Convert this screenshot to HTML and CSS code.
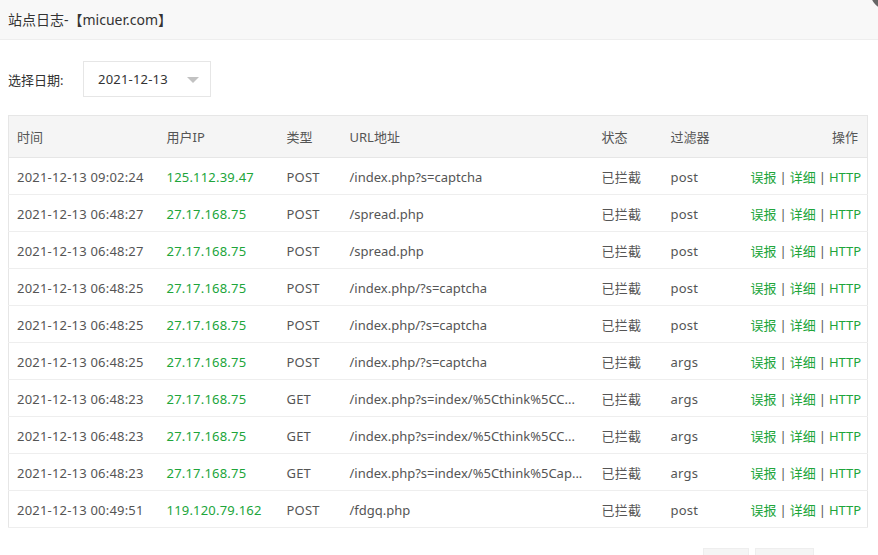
FILE: index.html
```html
<!DOCTYPE html>
<html lang="zh-CN">
<head>
<meta charset="utf-8">
<title>站点日志</title>
<link rel="stylesheet" href="styles.css">
</head>
<body>
<div class="layer">
  <div class="layer-title">站点日志-【micuer.com】</div>
  <span class="layer-close"></span>
  <div class="layer-content">
    <div class="filter">
      <span class="filter-label">选择日期:</span>
      <div class="select">
        <span class="select-value">2021-12-13</span>
        <span class="select-arrow"></span>
      </div>
    </div>
    <table class="log-table">
      <colgroup>
        <col class="c-time"><col class="c-ip"><col class="c-type"><col class="c-url"><col class="c-state"><col class="c-filter"><col class="c-op">
      </colgroup>
      <thead>
        <tr><th>时间</th><th>用户IP</th><th>类型</th><th>URL地址</th><th>状态</th><th>过滤器</th><th class="op">操作</th></tr>
      </thead>
      <tbody>
        <tr><td>2021-12-13 09:02:24</td><td class="ip">125.112.39.47</td><td>POST</td><td class="url">/index.php?s=captcha</td><td>已拦截</td><td>post</td><td class="op"><a>误报</a><span class="sep">|</span><a>详细</a><span class="sep">|</span><a>HTTP</a></td></tr>
        <tr><td>2021-12-13 06:48:27</td><td class="ip">27.17.168.75</td><td>POST</td><td class="url">/spread.php</td><td>已拦截</td><td>post</td><td class="op"><a>误报</a><span class="sep">|</span><a>详细</a><span class="sep">|</span><a>HTTP</a></td></tr>
        <tr><td>2021-12-13 06:48:27</td><td class="ip">27.17.168.75</td><td>POST</td><td class="url">/spread.php</td><td>已拦截</td><td>post</td><td class="op"><a>误报</a><span class="sep">|</span><a>详细</a><span class="sep">|</span><a>HTTP</a></td></tr>
        <tr><td>2021-12-13 06:48:25</td><td class="ip">27.17.168.75</td><td>POST</td><td class="url">/index.php/?s=captcha</td><td>已拦截</td><td>post</td><td class="op"><a>误报</a><span class="sep">|</span><a>详细</a><span class="sep">|</span><a>HTTP</a></td></tr>
        <tr><td>2021-12-13 06:48:25</td><td class="ip">27.17.168.75</td><td>POST</td><td class="url">/index.php/?s=captcha</td><td>已拦截</td><td>post</td><td class="op"><a>误报</a><span class="sep">|</span><a>详细</a><span class="sep">|</span><a>HTTP</a></td></tr>
        <tr><td>2021-12-13 06:48:25</td><td class="ip">27.17.168.75</td><td>POST</td><td class="url">/index.php/?s=captcha</td><td>已拦截</td><td>args</td><td class="op"><a>误报</a><span class="sep">|</span><a>详细</a><span class="sep">|</span><a>HTTP</a></td></tr>
        <tr><td>2021-12-13 06:48:23</td><td class="ip">27.17.168.75</td><td>GET</td><td class="url">/index.php?s=index/%5Cthink%5CC...</td><td>已拦截</td><td>args</td><td class="op"><a>误报</a><span class="sep">|</span><a>详细</a><span class="sep">|</span><a>HTTP</a></td></tr>
        <tr><td>2021-12-13 06:48:23</td><td class="ip">27.17.168.75</td><td>GET</td><td class="url">/index.php?s=index/%5Cthink%5CC...</td><td>已拦截</td><td>args</td><td class="op"><a>误报</a><span class="sep">|</span><a>详细</a><span class="sep">|</span><a>HTTP</a></td></tr>
        <tr><td>2021-12-13 06:48:23</td><td class="ip">27.17.168.75</td><td>GET</td><td class="url">/index.php?s=index/%5Cthink%5Cap...</td><td>已拦截</td><td>args</td><td class="op"><a>误报</a><span class="sep">|</span><a>详细</a><span class="sep">|</span><a>HTTP</a></td></tr>
        <tr><td>2021-12-13 00:49:51</td><td class="ip">119.120.79.162</td><td>POST</td><td class="url">/fdgq.php</td><td>已拦截</td><td>post</td><td class="op"><a>误报</a><span class="sep">|</span><a>详细</a><span class="sep">|</span><a>HTTP</a></td></tr>
      </tbody>
    </table>
    <div class="pager">
      <span class="page-btn prev"></span>
      <span class="page-btn next"></span>
    </div>
  </div>
</div>
</body>
</html>
```

FILE: styles.css
```css
html, body {
  margin: 0;
  padding: 0;
  background: #fff;
  overflow: hidden;
}
body {
  font-family: "Noto Sans", "Noto Sans CJK SC", sans-serif;
  font-size: 13px;
  color: #555;
  width: 878px;
  height: 555px;
}
.layer {
  position: relative;
  height: 555px;
}
.layer-title {
  height: 39px;
  line-height: 39px;
  padding-left: 8px;
  font-size: 14px;
  color: #333;
  background: #f8f8f8;
  border-bottom: 1px solid #eee;
}
.layer-close {
  position: absolute;
  left: 871px;
  top: -21px;
  width: 30px;
  height: 30px;
  border-radius: 50%;
  background: #666;
}
.layer-content {
  padding: 21px 11px 0 8px;
}
.filter {
  display: flex;
  align-items: center;
  height: 36px;
}
.filter-label {
  color: #333;
  width: 75px;
  font-size: 13px;
}
.select {
  box-sizing: border-box;
  width: 128px;
  height: 36px;
  border: 1px solid #e6e6e6;
  display: flex;
  align-items: center;
  padding-left: 14px;
  position: relative;
  color: #333;
  letter-spacing: 0.2px;
}
.select-arrow {
  position: absolute;
  left: 103px;
  top: 15px;
  width: 0;
  height: 0;
  border-left: 6px solid transparent;
  border-right: 6px solid transparent;
  border-top: 6px solid #c2c2c2;
}
.log-table {
  margin-top: 18px;
  width: 859px;
  table-layout: fixed;
  border-collapse: collapse;
  border: 1px solid #e6e6e6;
}
.c-time { width: 150px; }
.c-ip { width: 120px; }
.c-type { width: 63px; }
.c-url { width: 252px; }
.c-state { width: 69px; }
.c-filter { width: 80px; }
.c-op { width: 125px; }
.log-table th {
  background: #f5f5f5;
  font-weight: normal;
  text-align: left;
  height: 41px;
  padding: 0 8px;
  color: #555;
  border-bottom: 1px solid #e6e6e6;
}
.log-table td {
  height: 35px;
  padding: 1px 8px 0;
  border-bottom: 1px solid #eee;
  white-space: nowrap;
  overflow: hidden;
  text-overflow: ellipsis;
  color: #555;
  letter-spacing: 0.2px;
}
.log-table td.url {
  padding-right: 4px;
  letter-spacing: 0;
}
.log-table .op {
  text-align: right;
  padding-right: 9px;
}
.log-table td.ip {
  color: #20a53a;
}
.log-table td.op {
  color: #555;
  overflow: visible;
  letter-spacing: 0;
}
.log-table td.op a {
  color: #20a53a;
}
.log-table .sep {
  margin: 0 3px;
  color: #555;
}
.pager {
  display: flex;
  justify-content: flex-end;
  gap: 6px;
  padding-right: 53px;
  margin-top: 20px;
}
.page-btn {
  display: block;
  height: 30px;
  background: #f5f5f5;
  border: 1px solid #eee;
  box-sizing: border-box;
}
.page-btn.prev { width: 46px; }
.page-btn.next { width: 59px; }
```
